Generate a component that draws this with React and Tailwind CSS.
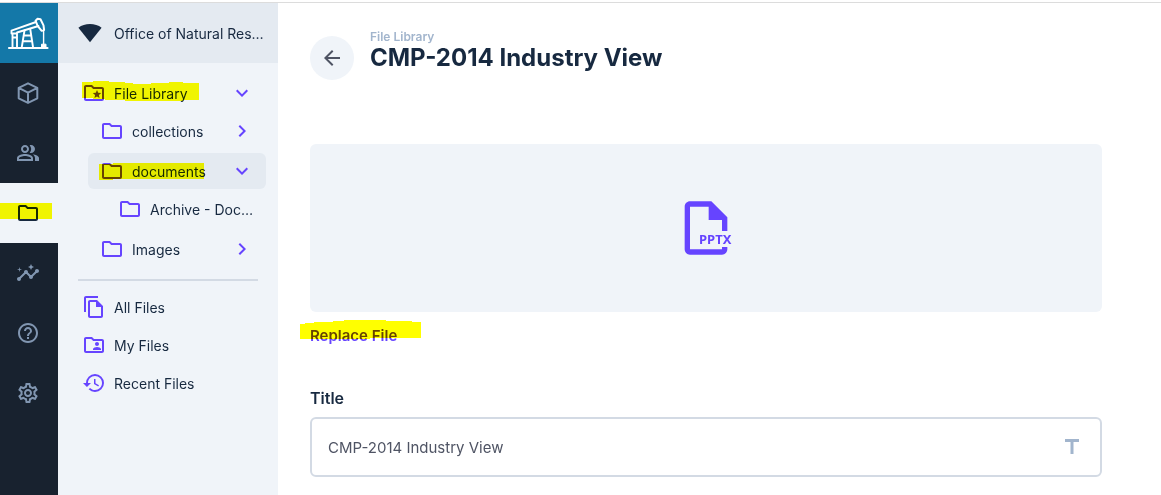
import React from "react";
import {
  MdOutlineFolder,
  MdOutlineFolderSpecial,
  MdOutlinePeopleAlt,
  MdInsights,
  MdHelpOutline,
  MdOutlineSettings,
  MdOutlineFileCopy,
  MdOutlineFolderShared,
  MdHistory,
  MdChevronRight,
  MdExpandMore,
  MdArrowBack,
  MdTitle,
  MdOutlineInsertDriveFile,
} from "react-icons/md";

function PumpJackLogo() {
  return (
    <svg viewBox="0 0 42 34" className="h-[34px] w-[42px]" fill="none" stroke="white" strokeWidth="1.9" strokeLinejoin="round" strokeLinecap="round" aria-hidden="true">
      <path d="M2 32h38.500" strokeWidth="2.200" />
      <path d="M5.500 31.500V17.500h4.500v14M5.500 21.500h4.500" />
      <path d="M4.500 17.500v-2.800L29 6M10 16.500L31.500 10" />
      <path d="M28.600 4.800L30.600 2.800l2.900.4 3 6.200.6 4.600-2.400.8-3.900-4.600z" strokeWidth="2" />
      <path d="M36.600 15.500V28" strokeWidth="1.400" />
      <path d="M34.500 31.500v-3.300h4.500v3.300z" fill="white" strokeWidth="1" />
      <path d="M17.500 14.500L14.800 31M23.300 13.500L26 31M16.800 19.500h7.400M16.200 25.200h9" />
    </svg>
  );
}

function BoxIcon() {
  return (
    <svg viewBox="0 0 24 24" className="size-6" fill="none" stroke="currentColor" strokeWidth="2" strokeLinejoin="round" aria-hidden="true">
      <path d="M12 2.3l9.3 4.6v10.4L12 21.900l-9.3-4.600V6.900zM2.700 6.900L12 11.700l9.300-4.800M12 11.700v10.200" />
    </svg>
  );
}

function Marker({ points, className }) {
  return (
    <svg className={`pointer-events-none absolute overflow-visible mix-blend-multiply ${className}`} aria-hidden="true">
      <polygon points={points} fill="#ffff00" />
    </svg>
  );
}

const modules = [
  { label: "Content", icon: <BoxIcon /> },
  { label: "Users", icon: <MdOutlinePeopleAlt className="size-6" /> },
  { label: "Files", icon: <MdOutlineFolder className="size-6" />, active: true },
  { label: "Insights", icon: <MdInsights className="size-6" /> },
  { label: "Documentation", icon: <MdHelpOutline className="size-6" /> },
  { label: "Settings", icon: <MdOutlineSettings className="size-6" /> },
];

function ModuleBar() {
  return (
    <nav aria-label="Modules" className="flex w-[58px] shrink-0 flex-col bg-[#18222f]">
      <a href="#home" aria-label="Home" className="flex h-[60px] items-center justify-center bg-[#1478a8] pr-0.5">
        <PumpJackLogo />
      </a>
      {modules.map((m) => (
        <a
          key={m.label}
          href="#module"
          aria-label={m.label}
          className={`relative flex h-[60px] items-center justify-center pr-0.5 ${m.active ? "bg-[#f0f4f9] text-[#172940]" : "text-[#8196b1]"}`}
        >
          {m.icon}
          {m.active && <Marker className="left-0 top-5 h-4 w-[52px]" points="0,0 52,0 52,16 0,16" />}
        </a>
      ))}
    </nav>
  );
}

function NavRow({ icon: Icon, label, chevron: Chevron, active, marker }) {
  return (
    <a href="#folder" className={`relative flex h-9 items-center gap-2 rounded-md px-3 ${active ? "bg-[#e4eaf1]" : ""}`}>
      <Icon className="size-6 shrink-0 text-[#6644ff]" />
      <span className="min-w-0 flex-1 truncate pt-0.5 text-sm text-[#172940]">{label}</span>
      {Chevron && <Chevron className="size-6 shrink-0 text-[#6644ff]" />}
      {marker}
    </a>
  );
}

function FileNav() {
  return (
    <aside className="flex w-[220px] shrink-0 flex-col bg-[#f0f4f9]">
      <header className="flex h-[60px] items-center gap-2 bg-[#e4eaf1] pl-5 pr-3">
        <svg viewBox="0 0 24 24" className="size-6 shrink-0" fill="#172940" aria-hidden="true">
          <path d="M.4 6.700C3.600 4.200 7.600 3 12 3s8.400 1.200 11.600 3.700L12 21.300z" />
        </svg>
        <span className="min-w-0 flex-1 truncate pl-1 pt-0.5 text-sm text-[#172940]">Office of Natural Resources Revenue</span>
      </header>
      <nav aria-label="Folders" className="p-3">
        <NavRow
          icon={MdOutlineFolderSpecial}
          label="File Library"
          chevron={MdExpandMore}
          marker={<Marker className="left-3 top-1.5 h-5 w-[117px]" points="0,1 11,1 11,0 27,0 27,1 43,1 43,2 51,2 51,3 69,3 69,2 87,2 87,1 101,1 101,2 117,2 117,19 101,19 101,20 43,20 43,19 23,19 23,18 11,18 11,17 0,17" />}
        />
        <div className="mt-0.5 flex flex-col gap-1 pl-[18px]">
          <NavRow icon={MdOutlineFolder} label="collections" chevron={MdChevronRight} />
          <div>
            <NavRow
              icon={MdOutlineFolder}
              label="documents"
              chevron={MdExpandMore}
              active
              marker={<Marker className="left-[11px] top-2.5 h-[18px] w-[105px]" points="0,1 14,1 14,0 105,0 105,16 14,16 14,17 0,17" />}
            />
            <div className="mt-0.5 pl-[18px]">
              <NavRow icon={MdOutlineFolder} label="Archive - Documents" />
            </div>
          </div>
          <NavRow icon={MdOutlineFolder} label="Images" chevron={MdChevronRight} />
        </div>
        <hr className="mx-2 mb-2 mt-3 border-t-2 border-[#d3dae4]" />
        <div className="flex flex-col gap-0.5">
          <NavRow icon={MdOutlineFileCopy} label="All Files" />
          <NavRow icon={MdOutlineFolderShared} label="My Files" />
          <NavRow icon={MdHistory} label="Recent Files" />
        </div>
      </nav>
    </aside>
  );
}

function FileDetail() {
  return (
    <main className="min-w-0 flex-1 px-8 pt-[26px]">
      <header className="flex gap-4">
        <button type="button" aria-label="Back" className="mt-[7px] flex size-11 shrink-0 items-center justify-center rounded-full bg-[#f0f4f9] text-[#4f5464]">
          <MdArrowBack className="size-6" />
        </button>
        <div>
          <a href="#library" className="block text-xs/4 font-semibold text-[#a2b5cd]">File Library</a>
          <h1 className="text-2xl/[26px] font-bold text-[#172940]">CMP-2014 Industry View</h1>
        </div>
      </header>
      <div className="mt-16 max-w-[792px]">
        <div className="flex h-[168px] items-center justify-center rounded-md bg-[#f0f4f9] text-[#6644ff]">
          <div className="relative">
            <MdOutlineInsertDriveFile className="size-16" />
            <span className="absolute left-[25px] top-[35px] bg-[#f0f4f9] font-['Noto_Sans',sans-serif] text-[13px]/4 font-bold">PPTX</span>
          </div>
        </div>
        <button type="button" className="relative mt-3 block text-[15px]/6 font-semibold text-[#6644ff]">
          Replace File
          <Marker className="-left-2.5 -top-1 h-5 w-[121px]" points="0,4 5,4 5,3 14,3 14,2 33,2 33,1 44,1 44,0 86,0 86,1 112,1 112,2 121,2 121,18 70,18 70,19 0,19" />
        </button>
        <label htmlFor="title" className="mt-[38px] block text-base/6 font-semibold text-[#172940]">Title</label>
        <div className="mt-[7px] flex h-[60px] items-center rounded-md border-2 border-[#d3dae4] px-4">
          <input id="title" type="text" defaultValue="CMP-2014 Industry View" className="min-w-0 flex-1 bg-transparent pt-0.5 text-[15px] text-[#4f5464] outline-none" />
          <MdTitle className="size-6 text-[#a2b5cd]" />
        </div>
      </div>
    </main>
  );
}

export default function App() {
  return (
    <div className="flex min-h-screen flex-col bg-white pt-0.5 font-['Inter',sans-serif]">
      <div className="flex flex-1 border-t border-[#dcdcdc]">
        <ModuleBar />
        <FileNav />
        <FileDetail />
      </div>
    </div>
  );
}
